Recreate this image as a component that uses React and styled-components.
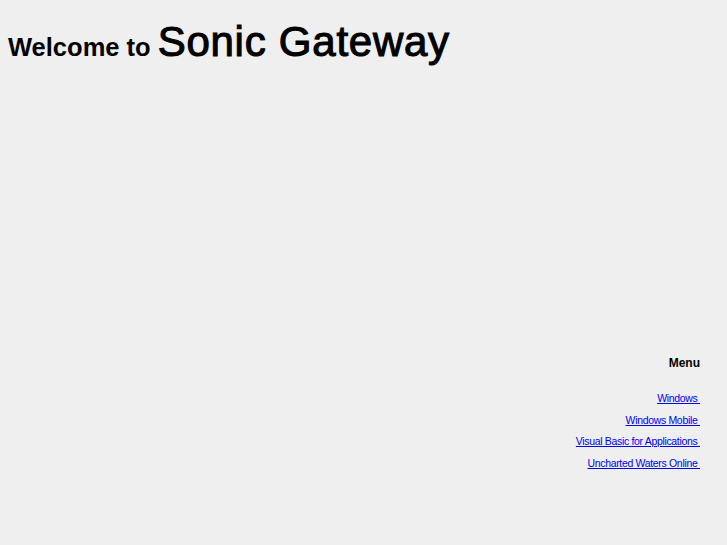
import React from "react";
import styled, { createGlobalStyle } from "styled-components";

const Global = createGlobalStyle`
  html, body { margin: 0; padding: 0; background: #efefef; }
  body { font-family: "Liberation Sans", Arial, sans-serif; color: #000; }
`;

const Page = styled.div`
  width: 727px;
  height: 545px;
  display: flex;
  flex-direction: column;
  background: #efefef;
`;

const Header = styled.h1`
  margin: 0;
  padding: 21px 0 0 8px;
  display: flex;
  align-items: baseline;
  gap: 7px;
  font-weight: normal;
  line-height: 1;
`;

const Small = styled.span`
  font-size: 25.5px;
  font-weight: bold;
`;

const Big = styled.span`
  font-size: 42px;
  letter-spacing: 0.75px;
  -webkit-text-stroke: 1.1px #000;
`;

const Menu = styled.nav`
  margin-top: 293px;
  padding-right: 27px;
  display: flex;
  flex-direction: column;
  align-items: flex-end;
`;

const MenuTitle = styled.div`
  font-size: 12px;
  font-weight: bold;
  margin-bottom: 18px;
`;

const MenuLink = styled.a`
  font-size: 10.5px;
  letter-spacing: -0.33px;
  color: #0000ee;
  text-decoration: underline;
  line-height: 21.7px;
  white-space: pre;
`;

const links = [
  "Windows",
  "Windows Mobile",
  "Visual Basic for Applications",
  "Uncharted Waters Online",
];

export default function App() {
  return (
    <Page>
      <Global />
      <Header>
        <Small>Welcome to</Small>
        <Big>Sonic Gateway</Big>
      </Header>
      <Menu>
        <MenuTitle>Menu</MenuTitle>
        {links.map((l) => (
          <MenuLink key={l} href="#">
            {l + " "}
          </MenuLink>
        ))}
      </Menu>
    </Page>
  );
}
